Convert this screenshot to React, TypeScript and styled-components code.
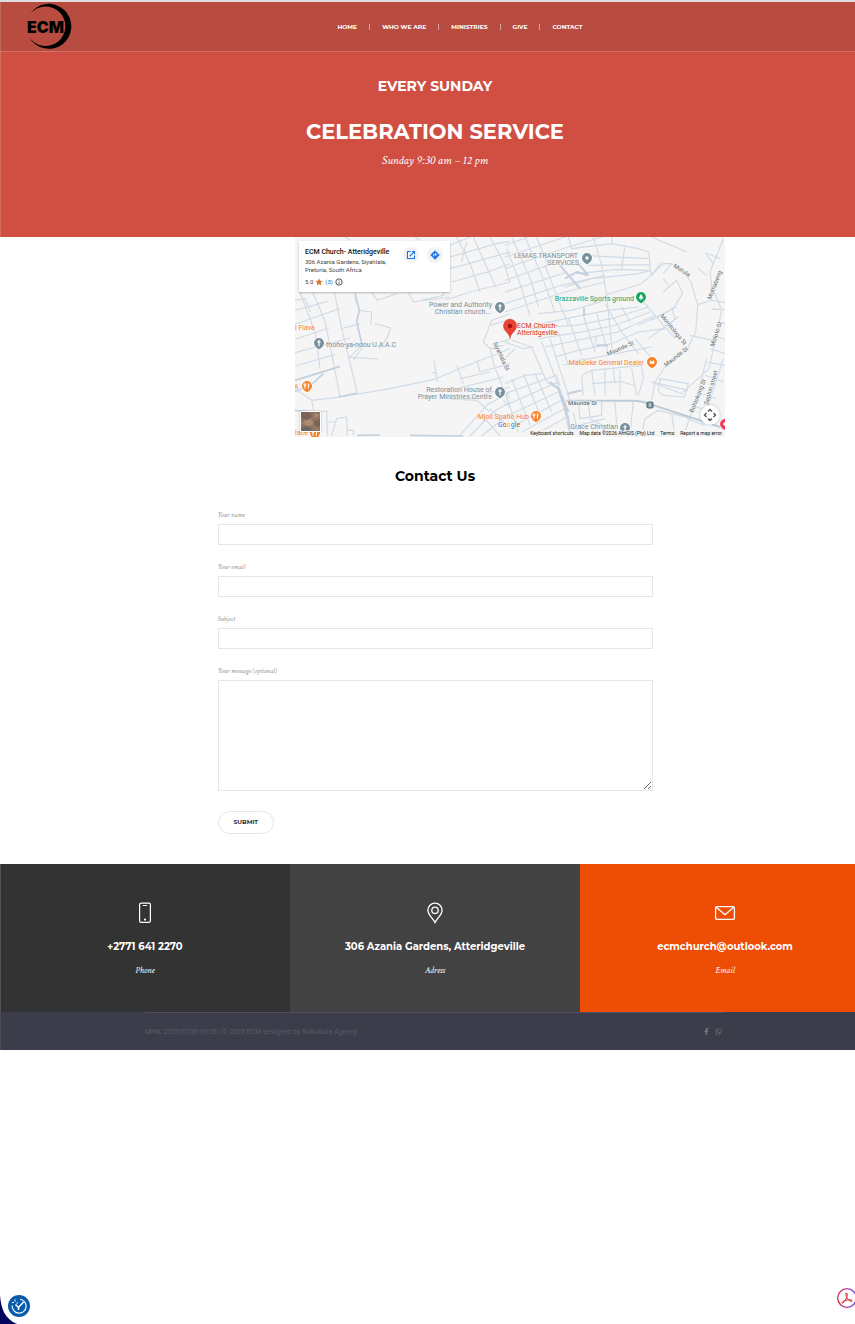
import React from 'react';
import styled, { createGlobalStyle } from 'styled-components';
import { FaFacebookF, FaWhatsapp } from 'react-icons/fa';

const display = "Montserrat, Inter, 'Liberation Sans', sans-serif";
const serif = "'Crimson Text', 'Liberation Serif', serif";
const roboto = "Roboto, 'Liberation Sans', sans-serif";

const GlobalStyle = createGlobalStyle`
  *, *::before, *::after { box-sizing: border-box; }
  html, body { margin: 0; background: #fff; overflow-x: hidden; }
  h1, h2, h3, p, ul { margin: 0; padding: 0; }
  a { color: inherit; text-decoration: none; }
`;

const Page = styled.div`
  width: calc(100% + 15px);
  border-top: 2px solid #e0dfdf;
  font-family: ${display};
`;

const Header = styled.header`
  display: flex;
  align-items: center;
  height: 50px;
  padding: 0 23px 0 27px;
  background: #b84c40;
  border-bottom: 1px solid #cf7268;
  box-shadow: inset 1px 0 rgba(255, 255, 255, 0.16);
`;

const LogoLink = styled.a`
  display: flex;
  flex: none;
  svg { display: block; }
`;

const Nav = styled.nav`
  display: flex;
  flex: 1;
  justify-content: center;
`;

const NavLink = styled.a`
  display: flex;
  align-items: center;
  color: #fff;
  font-size: 6px;
  line-height: 8px;
  font-weight: 700;
  & + &::before {
    content: '';
    width: 1px;
    height: 6px;
    margin: 0 12px;
    background: #dba59f;
  }
`;

const Hero = styled.section`
  display: flex;
  flex-direction: column;
  align-items: center;
  padding: 24px 20px 68px;
  background: #d04f42;
  color: #fff;
  text-align: center;
  box-shadow: inset 1px 0 rgba(255, 255, 255, 0.16);
`;

const Kicker = styled.h2`
  font-size: 14px;
  line-height: 20px;
  font-weight: 700;
`;

const Title = styled.h1`
  margin-top: 20px;
  font-size: 21px;
  line-height: 32px;
  font-weight: 700;
`;

const Time = styled.p`
  margin-top: 5px;
  font-family: ${serif};
  font-style: italic;
  font-size: 12px;
  line-height: 16px;
`;

const MapRow = styled.div`
  width: 100%;
  max-width: 580px;
  margin: 0 auto;
  padding-left: 150px;
`;

const MapFrame = styled.section`
  position: relative;
  overflow: hidden;
  background: #f5f5f5;
  font-family: ${roboto};
`;

const MapDrawing = styled.svg`
  display: block;
  width: 100%;
  height: auto;
  font-family: ${roboto};
`;

const PlaceCard = styled.div`
  position: absolute;
  top: 4px;
  left: 4px;
  display: flex;
  justify-content: space-between;
  width: 151px;
  padding: 6px 7px 6px 6px;
  background: #fff;
  color: #444;
  font-size: 6px;
  line-height: 8px;
  box-shadow: 0 1px 2px rgba(0, 0, 0, 0.25);
`;

const PlaceName = styled.h3`
  margin-bottom: 1px;
  color: #111;
  font-size: 7px;
  line-height: 10px;
  font-weight: 500;
  white-space: nowrap;
`;

const PlaceText = styled.p`
  white-space: nowrap;
`;

const Rating = styled.p`
  display: flex;
  align-items: center;
  gap: 2px;
  margin-top: 4px;
  a { color: #1a5fc8; }
`;

const PlaceActions = styled.div`
  display: flex;
  gap: 8px;
`;

const RoundLink = styled.a`
  display: grid;
  place-items: center;
  width: 16px;
  height: 16px;
  border-radius: 50%;
  background: #f1f3f4;
`;

const MapButton = styled.button<{ $kind: 'satellite' | 'pan' }>`
  position: absolute;
  bottom: ${p => (p.$kind === 'pan' ? 12 : 5)}px;
  ${p => (p.$kind === 'pan' ? 'right' : 'left')}: 5px;
  display: grid;
  place-items: center;
  width: ${p => (p.$kind === 'pan' ? 20 : 21)}px;
  height: ${p => (p.$kind === 'pan' ? 20 : 21)}px;
  padding: 0;
  border: ${p => (p.$kind === 'pan' ? '0' : '1px solid #fff')};
  border-radius: ${p => (p.$kind === 'pan' ? '50%' : '1px')};
  background: #fff;
  box-shadow: 0 0 2px rgba(0, 0, 0, 0.3);
`;

const Attribution = styled.div`
  position: absolute;
  right: 0;
  bottom: 0;
  display: flex;
  gap: 6px;
  padding: 0 3px;
  background: rgba(245, 245, 245, 0.8);
  color: #111;
  font-size: 5px;
  line-height: 7px;
  white-space: nowrap;
`;

const Contact = styled.section`
  max-width: 435px;
  margin: 0 auto;
  padding: 29px 0 30px;
`;

const ContactTitle = styled.h2`
  margin-bottom: 24px;
  color: #000;
  font-size: 14px;
  line-height: 20px;
  font-weight: 700;
  text-align: center;
`;

const Form = styled.form`
  display: flex;
  flex-direction: column;
  align-items: flex-start;
  gap: 17px;
`;

const Field = styled.label`
  display: flex;
  flex-direction: column;
  gap: 4px;
  width: 100%;
  color: #8d8d8d;
  font-family: ${serif};
  font-style: italic;
  font-size: 7px;
  line-height: 10px;
`;

const Input = styled.input`
  width: 100%;
  height: 21px;
  padding: 0 8px;
  border: 1px solid #e6e6e6;
  border-radius: 0;
  background: #fff;
  font: 8px ${serif};
`;

const TextArea = styled.textarea`
  display: block;
  width: 100%;
  height: 111px;
  padding: 8px;
  border: 1px solid #e6e6e6;
  border-radius: 0;
  background: #fff;
  font: 8px ${serif};
  resize: vertical;
`;

const Submit = styled.button`
  margin-top: 3px;
  height: 23px;
  padding: 0 15px 2px;
  border: 1px solid #e6e6e6;
  border-radius: 12px;
  background: #fff;
  color: #2f2f35;
  font-family: ${display};
  font-size: 6px;
  line-height: 8px;
  font-weight: 700;
`;

const InfoGrid = styled.section`
  display: grid;
  grid-template-columns: repeat(3, 1fr);
`;

const InfoCell = styled.div<{ $bg: string }>`
  display: flex;
  flex-direction: column;
  align-items: center;
  padding: 38px 10px 36px;
  background: ${p => p.$bg};
  color: #fff;
  text-align: center;
  svg { display: block; }
  &:first-child { box-shadow: inset 1px 0 rgba(255, 255, 255, 0.16); }
`;

const InfoValue = styled.a`
  margin-top: 15px;
  font-size: 10px;
  line-height: 16px;
  font-weight: 700;
`;

const InfoLabel = styled.p`
  margin-top: 9px;
  font-family: ${serif};
  font-style: italic;
  font-size: 9px;
  line-height: 12px;
`;

const Footer = styled.footer`
  background: #3c3d4a;
  box-shadow: inset 1px 0 rgba(255, 255, 255, 0.08);
`;

const FooterInner = styled.div`
  display: flex;
  align-items: center;
  justify-content: space-between;
  max-width: 580px;
  height: 38px;
  margin: 0 auto;
  padding-right: 3px;
  border-top: 1px solid #504f5d;
  color: #5a5b68;
  font-family: ${roboto};
  font-size: 7px;
  line-height: 10px;
`;

const Social = styled.div`
  display: flex;
  gap: 5px;
  color: #7a7b87;
  a { display: flex; }
`;

const CornerButton = styled.button`
  position: fixed;
  left: 0;
  bottom: 0;
  width: 32px;
  height: 32px;
  padding: 0;
  border: 0;
  background: none;
  svg { display: block; }
`;

const PdfButton = styled.button`
  position: fixed;
  right: -4px;
  bottom: 13px;
  width: 24px;
  height: 26px;
  padding: 0;
  border: 0;
  background: none;
  svg { display: block; }
`;

const Logo = () => (
  <svg width="46" height="48" viewBox="27 3 46 48" role="img" aria-label="ECM">
    <path d="M30 14A22.5 22.5 0 1 1 29 37A19.8 19.8 0 1 0 30 14Z" fill="#000" />
    <text x="27" y="33" fontFamily="Inter, 'Liberation Sans', sans-serif" fontWeight="900" fontSize="16">ECM</text>
  </svg>
);

const westRoads = [
  'M15 235L112 208M15 277L120 240M15 322L118 287M15 362L180 318M15 402L135 368M15 445L145 405M15 478L60 462L100 425',
  'M30 180L75 300L90 410M68 180L105 268L122 350L150 495M133 180L155 290L202 483M15 205L45 200L62 240',
  'M120 240L150 230M155 290L210 275M165 345L215 340L178 376L265 381M180 340L250 335',
  'M195 180L208 235L200 270L218 345L190 385M208 235L245 240L243 278M255 275L302 288L290 320L268 352M245 180L262 205L320 185M355 180L370 210L480 195',
  'M65 505L150 495L300 470L430 443L520 405L660 350M65 505L72 540L110 537L112 610M15 470L65 505M125 610L140 560L170 555L172 610M110 570L140 570M172 595L190 595L190 610',
  'M432 385L442 450M500 400L520 455M425 420L442 425',
  'M480 40L540 15M480 75L620 35L660 28M480 110L560 88L660 60M485 150L600 118L660 95M465 205L540 180L660 150M395 205L460 190L480 100',
  'M500 15L540 95L570 180M550 15L590 105L620 170M600 15L640 90L660 150M530 30L515 90M375 15L390 25M165 15L180 25',
  'M660 245L605 265L580 330L600 350L612 400L640 470L660 500M600 280L660 262M600 350L640 340M560 385L570 420L660 395M510 440L600 420M500 470L640 435M540 500L660 465M630 330L660 322',
  'M510 610L590 520L660 480M540 612L610 540L660 510M575 612L660 545M600 530L660 590M580 555L630 612M470 500L560 505L600 540M640 505L660 525',
];
const westWide = ['M195 190L208 235L200 270L218 345', 'M15 445L150 403', 'M15 478L60 462L100 425', 'M72 540L15 535', 'M145 495L202 483', 'M202 610L270 609', 'M360 610L520 612'];

const eastRoads = [
  'M0 40L70 15M0 75L120 35L180 15M0 110L50 92L190 45L290 15M0 145L130 100M0 180L180 122M0 215L170 160L300 130M0 240L180 180L300 150',
  'M20 15L80 150L100 225M60 15L110 130L150 240M95 15L130 100M5 50L40 140L75 250M120 100L190 280',
  'M190 15L200 50M265 15L290 100L305 190L322 360M200 50L320 35L400 50L432 60L436 115L400 125L260 140L180 165M230 70L430 80M250 100L435 98M215 125L340 112L435 115M320 35L322 15M360 40L350 110',
  'M100 245L200 235L300 205L390 195M110 275L230 250L310 235L400 225M75 290L210 280L320 260L430 225M100 320L230 300L330 280L435 240M120 345L240 320L340 300L450 250',
  'M135 320L195 505M110 330L190 540M160 300L190 400M190 260L230 370M235 250L270 360M275 245L310 365M300 215L350 300L400 365M350 225L375 270',
  'M150 375L220 355L320 335L400 300L480 290M175 400L240 380M230 385L330 365L440 345M270 340L275 308M320 365L370 340',
  'M390 320L440 380M400 190L450 250L510 320M470 90L440 130L435 115M500 95L475 95L410 155L300 190',
  'M440 15L545 60M475 125L500 95L530 110L558 150L578 218L572 300L545 355L480 405L450 450L440 505',
  'M475 180L515 145L533 185L505 230L440 265M400 280L515 225M430 320L520 255M500 225L510 260L490 285M475 140L490 160',
  'M655 20L615 120L620 160L650 235L612 410L530 485L440 450M555 310L625 325M578 218L620 205L660 212',
  'M620 232L660 232M635 270L660 275M625 310L660 322M615 350L660 365M605 390L660 400M600 430L655 450M575 480L635 500M560 520L620 540M545 560L600 580M605 380L575 500L535 612M655 380L620 490L590 580M600 60L625 95M580 110L605 130M610 65L645 80',
  'M465 440L460 478L475 490L538 495L550 455L465 440M440 450L550 475M385 505L375 612M410 612L420 560L460 535L500 545L510 612M500 545L560 560M220 580L300 560',
  'M260 415L270 490M300 410L300 490M260 455L345 448L385 460M230 430L260 415L410 400L415 440L400 490M345 415L345 490M380 410L395 490M230 430L235 490M325 410L330 455',
  'M80 345L125 450L160 470L180 540L195 610M80 345L20 325M0 455L60 430L110 425M0 485L155 430M0 520L160 450M0 555L170 475M20 585L170 505M50 600L178 530M95 605L185 555',
  'M20 440L75 580M55 425L110 560M90 425L140 540M0 480L40 600M155 430L165 460M220 510L225 560L290 550L290 510M205 540L220 612M250 510L255 560L310 590M330 510L335 580',
  'M0 330L55 350L80 345M30 350L0 380',
];
const eastWide = ['M165 100L225 170', 'M180 140L215 120L250 130M215 90L250 130', 'M237 228L237 252', 'M275 340L310 340', 'M135 450L160 470L190 560L195 612', 'M187 485L230 475', 'M170 490L190 540'];

const Poi = ({ x, y, color, glyph }: { x: number; y: number; color: string; glyph: 'cross' | 'dot' | 'food' | 'tree' | 'bag' }) => (
  <g transform={`translate(${x} ${y})`}>
    <path d="M-5.6 1.5Q-4 5 0 7.6Q4 5 5.6 1.5Z" fill="#fff" />
    <circle r="5.8" fill="#fff" />
    <path d="M-3.5 3.8L0 6.6L3.5 3.8Z" fill={color} />
    <circle r="5" fill={color} />
    {glyph === 'cross' && <path d="M0-3V3.2M-1.8-1H1.8" stroke="#fff" strokeWidth="1.2" />}
    {glyph === 'dot' && <circle r="1.7" fill="#fff" />}
    {glyph === 'food' && <path d="M-2-2.5V2.8M-2.8-2.5V0H-1.2V-2.5M1.4 2.8V-2.5Q2.7-1 1.4 .5" fill="none" stroke="#fff" strokeWidth=".9" />}
    {glyph === 'tree' && <path d="M0-3.2L2.4 1.4H-2.4ZM-.5 1H.5V3H-.5Z" fill="#fff" />}
    {glyph === 'bag' && <path d="M-2.3-1.8H2.3V2H-2.3ZM-1-1.8Q0 .8 1-1.8" fill="#fff" stroke={color} strokeWidth=".4" />}
  </g>
);

const halo = { stroke: '#f5f5f5', strokeWidth: 1, paintOrder: 'stroke' as const };
const slate = '#78909c';
const orange = '#f5842b';

const MapArt = () => (
  <MapDrawing viewBox="0 0 430 200" role="img" aria-label="Map of Atteridgeville">
    <rect width="430" height="200" fill="#f5f5f5" />
    <g fill="none" stroke="#cfdbe6" strokeWidth="3.4" strokeLinejoin="round">
      <g transform="translate(-5 -5) scale(.33333)">
        {westRoads.map(d => <path key={d} d={d} />)}
        {westWide.map(d => <path key={d} d={d} stroke="#c3d0de" strokeWidth="5" />)}
      </g>
      <g transform="translate(210 -5) scale(.33333)">
        {eastRoads.map(d => <path key={d} d={d} />)}
        {eastWide.map(d => <path key={d} d={d} stroke="#c3d0de" strokeWidth="6" />)}
        <path d="M185 506H385Q410 506 440 518L660 590" stroke="#bccad6" strokeWidth="6" />
      </g>
    </g>
    <g fontSize="6" fill="#5f6b73" {...halo}>
      <text transform="translate(378 30) rotate(32)">Morula</text>
      <text transform="translate(416 63) rotate(-69)">Mothabeng</text>
      <text transform="translate(365 79) rotate(51)">Morotologa St</text>
      <text transform="translate(419 110) rotate(-72)">Moloto St</text>
      <text transform="translate(313 119) rotate(-24)">Maunde St</text>
      <text transform="translate(371 130) rotate(-38)">Maunde St</text>
      <text transform="translate(398 176) rotate(-68)">Bohlokong St</text>
      <text transform="translate(413 168) rotate(-74)">Sephiri street</text>
      <text transform="translate(198 106) rotate(65)">Siyahlala St</text>
      <text x="273" y="168" fill="#455a64">Maunde St</text>
    </g>
    <g fontSize="7" fill={slate} {...halo}>
      <text x="283" y="21" textAnchor="end">LEMAS TRANSPORT</text>
      <text x="284" y="28" textAnchor="end">SERVICES</text>
      <text x="197" y="70" textAnchor="end">Power and Authority</text>
      <text x="196" y="77" textAnchor="end">Christian church...</text>
      <text x="31" y="110">thoho-ya-ndou U.A.A.C</text>
      <text x="197" y="155" textAnchor="end">Restoration House of</text>
      <text x="197" y="162" textAnchor="end">Prayer Ministries Centre</text>
      <text x="323" y="192" textAnchor="end">Grace Christian</text>
      <text x="339" y="64" textAnchor="end" fill="#22a06b">Brazzaville Sports ground</text>
      <text x="349" y="128" textAnchor="end" fill={orange}>Maluleke General Dealer</text>
      <text x="234" y="182" textAnchor="end" fill={orange}>Mjoli Spatlo Hub</text>
      <text x="0" y="93" fill={orange}>l Flava</text>
      <text x="-1" y="152" fill={orange}>A</text>
      <text x="0" y="198" fill={orange}>lace</text>
      <text x="222" y="91" fill="#d93025">ECM Church-</text>
      <text x="222" y="98" fill="#d93025">Atteridgeville</text>
    </g>
    <Poi x={292} y={21} color={slate} glyph="dot" />
    <Poi x={205} y={70} color={slate} glyph="cross" />
    <Poi x={24} y={106} color={slate} glyph="cross" />
    <Poi x={205} y={155} color={slate} glyph="cross" />
    <Poi x={330} y={191} color={slate} glyph="cross" />
    <Poi x={346} y={60} color="#1fa463" glyph="tree" />
    <Poi x={357} y={125} color={orange} glyph="bag" />
    <Poi x={241} y={179} color={orange} glyph="food" />
    <Poi x={12} y={149} color={orange} glyph="food" />
    <Poi x={20} y={196} color={orange} glyph="food" />
    <Poi x={430} y={187} color="#ef3f5b" glyph="dot" />
    <rect x="352" y="165" width="6" height="6" rx="1.5" fill="#8397a3" stroke="#546e7a" strokeWidth="1.2" />
    <path d="M354 167H356M354 169H356" stroke="#fff" strokeWidth=".8" />
    <path d="M215 101.500C214 95 208.500 94.500 208.500 88.700A6.500 6.500 0 0 1 221.500 88.700C221.500 94.500 216 95 215 101.500Z" fill="#ea4335" stroke="#d33226" strokeWidth=".5" />
    <circle cx="215" cy="89" r="2.300" fill="#a31515" />
    <text x="203" y="190" fontSize="7" fontWeight="500" stroke="#fff" strokeWidth="1" paintOrder="stroke">
      <tspan fill="#4285f4">G</tspan><tspan fill="#ea4335">o</tspan><tspan fill="#fbbc05">o</tspan><tspan fill="#4285f4">g</tspan><tspan fill="#34a853">l</tspan><tspan fill="#ea4335">e</tspan>
    </text>
  </MapDrawing>
);

const LocationMap = () => (
  <MapFrame aria-label="Location">
    <MapArt />
    <PlaceCard>
      <div>
        <PlaceName>ECM Church- Atteridgeville</PlaceName>
        <PlaceText>306 Azania Gardens, Siyahlala,<br />Pretoria, South Africa</PlaceText>
        <Rating>
          5.0
          <svg width="8" height="8" viewBox="0 0 24 24" aria-hidden="true"><path d="M12 1l3.200 7.500 8 .7-6 5.300 1.800 8L12 18.200 5 22.500l1.800-8-6-5.300 8-.7z" fill="#d9782d" /></svg>
          <a href="#reviews">(3)</a>
          <svg width="8" height="8" viewBox="0 0 24 24" fill="none" stroke="#333" strokeWidth="2.500" aria-hidden="true"><circle cx="12" cy="12" r="9.500" /><path d="M12 11v6M12 6.500v2" /></svg>
        </Rating>
      </div>
      <PlaceActions>
        <RoundLink href="#open" aria-label="Open in Maps">
          <svg width="10" height="10" viewBox="0 0 24 24" fill="none" stroke="#1a73e8" strokeWidth="2.600"><path d="M11 3.500H3.500V20.500H20.500V13M14 3.500H20.500V10M20 4L9 15" /></svg>
        </RoundLink>
        <RoundLink href="#directions" aria-label="Directions">
          <svg width="10" height="10" viewBox="0 0 24 24"><path d="M12 1.500L22.500 12 12 22.500 1.500 12Z" fill="#1a73e8" stroke="#1a73e8" strokeWidth="1.500" strokeLinejoin="round" /><path d="M8.500 15V11H14M12.500 7.500L16 11L12.500 14.500" fill="none" stroke="#fff" strokeWidth="2" /></svg>
        </RoundLink>
      </PlaceActions>
    </PlaceCard>
    <MapButton type="button" $kind="satellite" aria-label="Show satellite imagery">
      <svg width="19" height="19" viewBox="0 0 19 19">
        <rect width="19" height="19" fill="#8f7463" />
        <path d="M0 0H8L12 5L6 8L0 6ZM12 10L19 7V15L14 14Z" fill="#7b6257" />
        <path d="M3 9L9 7L13 11L9 14L4 13ZM13 1L18 3L15 6Z" fill="#ad8c74" />
        <path d="M0 16L7 14L12 19H0Z" fill="#6e665d" />
        <path d="M0 11L6 12L10 6L19 2M10 11L17 18" fill="none" stroke="#a88b76" strokeWidth=".8" />
      </svg>
    </MapButton>
    <MapButton type="button" $kind="pan" aria-label="Map camera controls">
      <svg width="14" height="14" viewBox="0 0 14 14" fill="none" stroke="#555" strokeWidth="1.400"><path d="M5 3.500L7 1.500L9 3.500M5 10.500L7 12.500L9 10.500M3.500 5L1.500 7L3.500 9M10.500 5L12.500 7L10.500 9" /></svg>
    </MapButton>
    <Attribution>
      <a href="#shortcuts">Keyboard shortcuts</a>
      <span>Map data ©2026 AfriGIS (Pty) Ltd</span>
      <a href="#terms">Terms</a>
      <a href="#report">Report a map error</a>
    </Attribution>
  </MapFrame>
);

const PhoneIcon = () => (
  <svg width="22" height="22" viewBox="0 0 22 22" fill="none" stroke="#fff" strokeWidth="1.200" aria-hidden="true">
    <rect x="5.600" y="1.100" width="10.800" height="19.300" rx="1.600" />
    <path d="M9 3.500H13" strokeWidth="1" /><circle cx="11" cy="17.600" r="1.1" fill="#fff" stroke="none" />
  </svg>
);

const PinIcon = () => (
  <svg width="22" height="22" viewBox="0 0 22 22" fill="none" stroke="#fff" strokeWidth="1.300" aria-hidden="true">
    <path d="M11 20.500C9.500 17 3.900 13 3.900 8.200A7.100 7.100 0 0 1 18.100 8.200C18.100 13 12.500 17 11 20.500Z" />
    <circle cx="11" cy="8.300" r="3.200" />
  </svg>
);

const MailIcon = () => (
  <svg width="22" height="22" viewBox="0 0 22 22" fill="none" stroke="#fff" strokeWidth="1.300" strokeLinejoin="round" aria-hidden="true">
    <rect x="1.600" y="4.600" width="18.800" height="12.800" rx="1.300" />
    <path d="M2 5L11 12.800L20 5" />
  </svg>
);

export default function App() {
  return (
    <>
      <GlobalStyle />
      <Page>
        <Header>
          <LogoLink href="#home"><Logo /></LogoLink>
          <Nav>
            <NavLink href="#home">HOME</NavLink>
            <NavLink href="#about">WHO WE ARE</NavLink>
            <NavLink href="#ministries">MINISTRIES</NavLink>
            <NavLink href="#give">GIVE</NavLink>
            <NavLink href="#contact">CONTACT</NavLink>
          </Nav>
        </Header>
        <main>
          <Hero>
            <Kicker>EVERY SUNDAY</Kicker>
            <Title>CELEBRATION SERVICE</Title>
            <Time>Sunday 9:30 am – 12 pm</Time>
          </Hero>
          <MapRow><LocationMap /></MapRow>
          <Contact id="contact">
            <ContactTitle>Contact Us</ContactTitle>
            <Form onSubmit={e => e.preventDefault()}>
              <Field>Your name<Input name="name" /></Field>
              <Field>Your email<Input name="email" type="email" /></Field>
              <Field>Subject<Input name="subject" /></Field>
              <Field>Your message (optional)<TextArea name="message" /></Field>
              <Submit type="submit">SUBMIT</Submit>
            </Form>
          </Contact>
          <InfoGrid>
            <InfoCell $bg="#333333">
              <PhoneIcon />
              <InfoValue href="tel:+27716412270">+2771 641 2270</InfoValue>
              <InfoLabel>Phone</InfoLabel>
            </InfoCell>
            <InfoCell $bg="#424242">
              <PinIcon />
              <InfoValue href="#map">306 Azania Gardens, Atteridgeville</InfoValue>
              <InfoLabel>Adress</InfoLabel>
            </InfoCell>
            <InfoCell $bg="#ed4d05">
              <MailIcon />
              <InfoValue href="mailto:ecmchurch@outlook.com">ecmchurch@outlook.com</InfoValue>
              <InfoLabel>Email</InfoLabel>
            </InfoCell>
          </InfoGrid>
        </main>
        <Footer>
          <FooterInner>
            <p>MRN: 2025/073610/08 | © 2025 ECM designed by Nukulture Agency</p>
            <Social>
              <a href="#facebook" aria-label="Facebook"><FaFacebookF size={7} /></a>
              <a href="#whatsapp" aria-label="WhatsApp"><FaWhatsapp size={7} /></a>
            </Social>
          </FooterInner>
        </Footer>
      </Page>
      <CornerButton type="button" aria-label="Cookie settings">
        <svg width="32" height="32" viewBox="0 0 32 32">
          <path d="M0 3C1 17 5 27 17 32H0Z" fill="#03045e" />
          <circle cx="19" cy="14" r="11" fill="#0a5bab" />
          <g fill="none" stroke="#fff" strokeWidth="1.100">
            <path d="M20 7.200A7 7 0 1 1 12.200 13.500" />
            <path d="M15.500 12.500L18.500 15.500L23.500 10M18.500 15.500V18" strokeWidth="1.500" />
            <path d="M12 10.500H14M15 7.500V9.500M16.500 11H18" />
          </g>
        </svg>
      </CornerButton>
      <PdfButton type="button" aria-label="Open PDF tools">
        <svg width="24" height="26" viewBox="0 0 24 26">
          <defs><linearGradient id="ring"><stop offset="0" stopColor="#d92b4b" /><stop offset=".55" stopColor="#b53bb5" /><stop offset="1" stopColor="#5a4de0" /></linearGradient></defs>
          <circle cx="12" cy="14" r="10" fill="#ddd" opacity=".6" />
          <circle cx="12" cy="13" r="9.300" fill="#fff" stroke="url(#ring)" strokeWidth="1.300" />
          <path d="M11.800 8C10.500 7.500 10.500 9.500 11.300 11.500C12.300 14 14.500 16.300 16.600 16.400C18 16.300 17.200 14.700 14.500 14.700C11.500 14.700 7 16.200 7 17.800C7.600 19.300 10 16 11.400 13C12.400 10.800 12.600 8.600 11.800 8Z" fill="none" stroke="#d8232a" strokeWidth="1" />
        </svg>
      </PdfButton>
    </>
  );
}
